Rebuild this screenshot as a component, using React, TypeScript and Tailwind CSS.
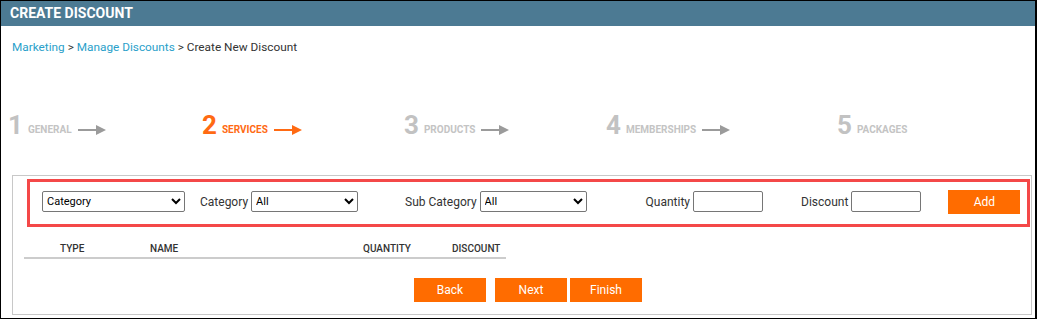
import { ReactNode } from "react";

const STEPS = [
  { n: 1, label: "GENERAL", w: "w-[194px]", arrow: true },
  { n: 2, label: "SERVICES", w: "w-[202px]", arrow: true, active: true },
  { n: 3, label: "PRODUCTS", w: "w-[202px]", arrow: true },
  { n: 4, label: "MEMBERSHIPS", w: "w-[231px]", arrow: true },
  { n: 5, label: "PACKAGES", w: "w-[150px]", arrow: false }
];

function StepArrow({ active }: { active?: boolean }) {
  const c = active ? "#ff6a13" : "#9b9b9b";
  return (
    <svg width="28" height="10" viewBox="0 0 28 10" className="mb-[4px] ml-[6px]">
      <rect x="0" y="4" width="19" height="2" fill={c} />
      <polygon points="18,0 28,5 18,10" fill={c} />
    </svg>
  );
}

function Select({ value, w }: { value: string; w: string }) {
  return (
    <select
      defaultValue={value}
      className={`${w} h-[21px] rounded-[2px] border border-[#767676] bg-white pl-0 text-[11px] text-black`}
    >
      <option>{value}</option>
    </select>
  );
}

function OrangeButton({ children, className }: { children: ReactNode; className?: string }) {
  return (
    <button
      type="button"
      className={`flex h-[24px] w-[72px] items-center justify-center bg-[#ff6c00] text-[12px] text-white ${className ?? ""}`}
    >
      {children}
    </button>
  );
}

export default function App() {
  return (
    <div className="flex h-[319px] w-[1037px] flex-col border border-r-2 border-black bg-white font-['Roboto',sans-serif]">
      <div className="flex h-[25px] items-center bg-[#4c7a93] pl-[9px] text-[14px] font-bold text-white">
        CREATE DISCOUNT
      </div>

      <div className="mt-[14px] pl-[11px] text-[11.8px] leading-[14px] text-[#333]">
        <span className="text-[#2a9fca]">Marketing</span> &gt;{" "}
        <span className="text-[#2a9fca]">Manage Discounts</span> &gt; Create New Discount
      </div>

      <div className="mt-[55px] flex h-[30px] items-end pl-[7px] font-bold">
        {STEPS.map((s) => (
          <div key={s.n} className={`flex items-end ${s.w}`}>
            <span
              className={`text-[26px] leading-[28px] ${s.active ? "text-[#ff6a13]" : "text-[#c2c2c2]"}`}
            >
              {s.n}
            </span>
            <span
              className={`mb-[3px] ml-[5px] text-[10px] leading-[12px] ${s.active ? "text-[#ff6a13]" : "text-[#c4c4c4]"}`}
            >
              {s.label}
            </span>
            {s.arrow && <StepArrow active={s.active} />}
          </div>
        ))}
      </div>

      <div className="ml-[11px] mt-[36px] h-[140px] w-[1020px] border border-[#c8c8c8]">
        <div className="ml-[14px] mt-[3px] flex h-[48px] w-[1003px] items-center border-[3px] border-[#f44848] pb-[3px] text-[12px] text-[#333]">
          <div className="ml-[12px]">
            <Select value="Category" w="w-[143px]" />
          </div>
          <span className="ml-[15px] mr-[3px]">Category</span>
          <Select value="All" w="w-[107px]" />
          <span className="ml-[47px] mr-[3px]">Sub Category</span>
          <Select value="All" w="w-[107px]" />
          <span className="ml-[59px] mr-[3px]">Quantity</span>
          <input className="h-[21px] w-[70px] rounded-[2px] border border-[#767676]" />
          <span className="ml-[38px] mr-[3px]">Discount</span>
          <input className="h-[21px] w-[70px] rounded-[2px] border border-[#767676]" />
          <OrangeButton className="ml-[27px] h-[23px] w-[71px]">Add</OrangeButton>
        </div>

        <div className="ml-[11px] mt-[12px] w-[482px] border-b-2 border-[#cccccc]">
          <div className="flex h-[18px] items-center text-[10px] font-medium text-[#333]">
            <span className="ml-[36px] w-[90px]">TYPE</span>
            <span className="w-[213px]">NAME</span>
            <span className="w-[89px]">QUANTITY</span>
            <span>DISCOUNT</span>
          </div>
        </div>

        <div className="mt-[19px] flex pl-[401px]">
          <OrangeButton>Back</OrangeButton>
          <OrangeButton className="ml-[9px]">Next</OrangeButton>
          <OrangeButton className="ml-[3px]">Finish</OrangeButton>
        </div>
      </div>
    </div>
  );
}
